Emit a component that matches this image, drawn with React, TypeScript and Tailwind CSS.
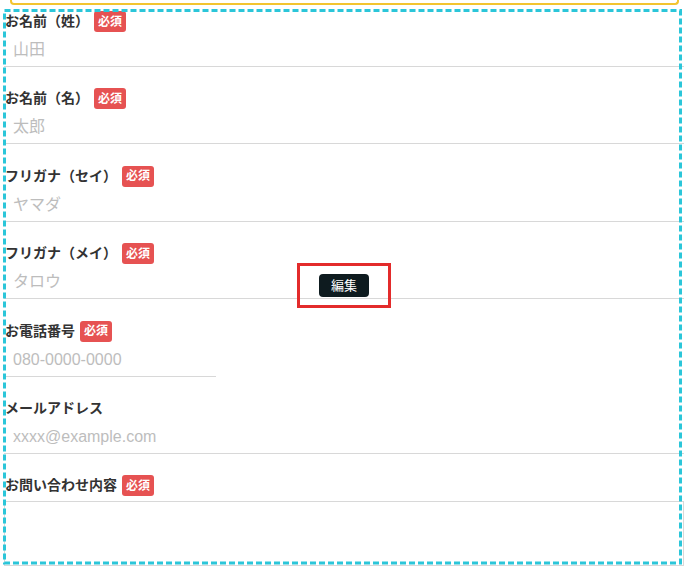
import React from "react"

const fields = [
  { label: "お名前（姓）", placeholder: "山田", required: true },
  { label: "お名前（名）", placeholder: "太郎", required: true },
  { label: "フリガナ（セイ）", placeholder: "ヤマダ", required: true },
  { label: "フリガナ（メイ）", placeholder: "タロウ", required: true },
  { label: "お電話番号", placeholder: "080-0000-0000", required: true, narrow: true },
  { label: "メールアドレス", placeholder: "xxxx@example.com", required: false },
]

function Badge() {
  return (
    <span className="ml-[5px] inline-flex h-[21px] items-center rounded-[3px] bg-[#e65252] px-[4px] text-[12px] leading-none text-white">
      必須
    </span>
  )
}

export default function App() {
  return (
    <div
      className="relative h-[571px] w-[690px] overflow-hidden bg-white text-[#333]"
      style={{ fontFamily: '"Liberation Sans", "Noto Sans CJK JP", sans-serif' }}
    >
      {/* the block above, cut off */}
      <div className="mx-[10px] h-[5px] w-[669px] rounded-b-[4px] border-2 border-t-0 border-[#f3c430]" />

      <div className="relative mt-[4px] ml-[4px] w-[680px]">
        {fields.map((f) => (
          <div key={f.label} className="mb-[19.4px]">
            <div className="flex h-[25px] items-center pl-[1px] text-[14px] font-bold">
              <span>{f.label}</span>
              {f.required && <Badge />}
            </div>
            <input
              className={`block h-[33px] border-b border-[#d8d8d8] pl-[9px] text-[16px] outline-none placeholder:text-[#bdbdbd] ${
                f.narrow ? "w-[212px]" : "w-full"
              }`}
              placeholder={f.placeholder}
            />
          </div>
        ))}

        <div>
          <div className="flex h-[25px] items-center pl-[1px] text-[14px] font-bold">
            <span>お問い合わせ内容</span>
            <Badge />
          </div>
          <textarea className="mt-[3px] block h-[65px] w-full resize-none border border-[#d8d8d8] outline-none" />
        </div>

        {/* selection frame around the edit button */}
        <div className="absolute left-[293px] top-[254px] flex h-[45px] w-[94px] items-center justify-center border-[3px] border-[#e32b2b]">
          <button className="h-[23px] w-[50px] rounded-[4px] bg-[#0e1b1f] text-[13px] text-white">編集</button>
        </div>
      </div>

      {/* dashed selection outline */}
      <svg className="pointer-events-none absolute left-0 top-0" width="690" height="571">
        <rect
          x="4.5"
          y="10.5"
          width="676"
          height="552.5"
          fill="none"
          stroke="#2bc6d9"
          strokeWidth="3"
          strokeDasharray="6 3"
        />
      </svg>
    </div>
  )
}
